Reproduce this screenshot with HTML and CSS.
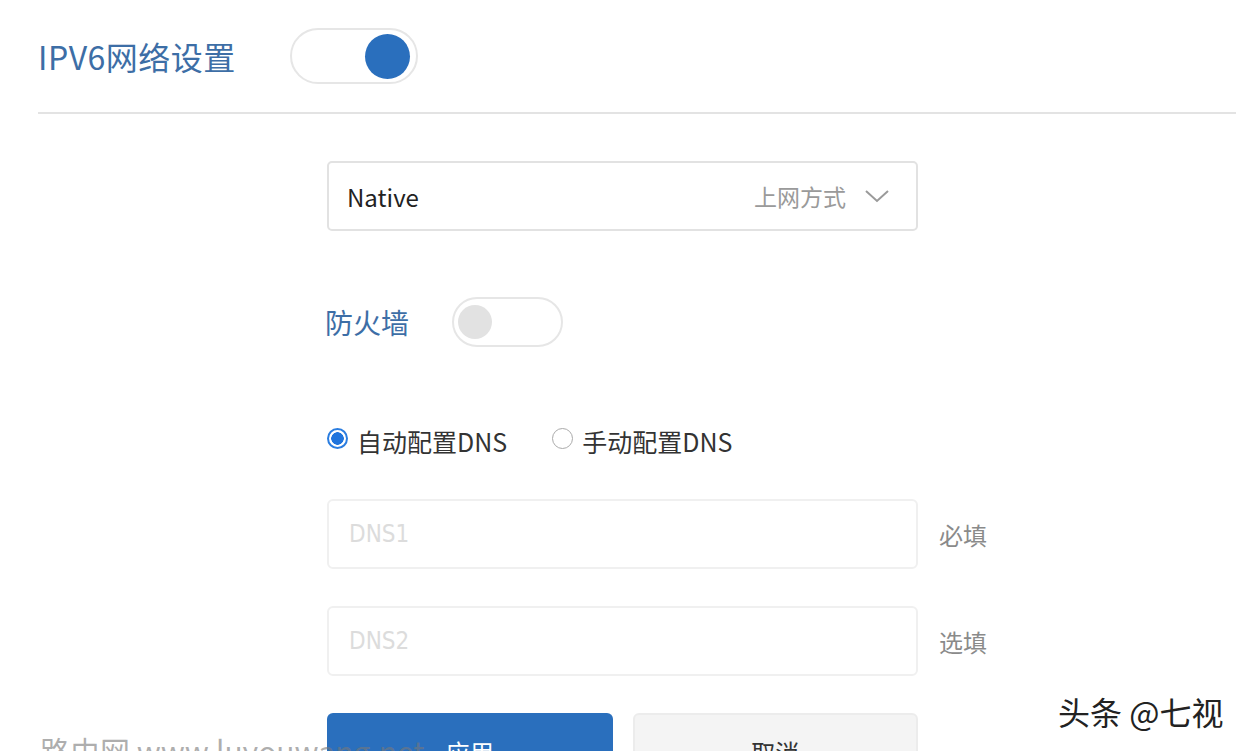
FILE: index.html
```html
<!DOCTYPE html>
<html lang="zh-CN">
<head>
    <meta charset="UTF-8">
    <title>IPV6网络设置</title>
    <link rel="stylesheet" href="styles.css">
</head>
<body>
    <div class="cabecalho">
        <h1 class="titulo">IPV6网络设置</h1>
        <div class="chave ligada"><span class="bolinha"></span></div>
    </div>

    <div class="formulario">
        <div class="seletor">
            <span class="valor">Native</span>
            <span class="rotulo">上网方式</span>
            <svg class="seta" width="26" height="16" viewBox="0 0 26 16">
                <path d="M2 3 L13 13 L24 3" fill="none" stroke="#9a9a9a" stroke-width="2"/>
            </svg>
        </div>

        <div class="linha-firewall">
            <span class="nome">防火墙</span>
            <div class="chave pequena"><span class="bolinha"></span></div>
        </div>

        <div class="radios">
            <label class="opcao"><span class="radio marcado"></span>自动配置DNS</label>
            <label class="opcao"><span class="radio"></span>手动配置DNS</label>
        </div>

        <div class="campo">
            <div class="entrada">DNS1</div>
            <span class="dica">必填</span>
        </div>
        <div class="campo segundo">
            <div class="entrada">DNS2</div>
            <span class="dica">选填</span>
        </div>

        <div class="botoes">
            <button class="aplicar">应用</button>
            <button class="cancelar">取消</button>
        </div>
    </div>

    <!-- marcas d'água -->
    <div class="marca-site">路由网 www.luyouwang.net</div>
    <div class="marca-autor">头条 @七视</div>
</body>
</html>
```

FILE: styles.css
```css
body {
    margin: 0;
    background: #fff;
    font-family: "Noto Sans CJK SC", "Noto Sans", sans-serif;
    width: 1246px;
    height: 751px;
    overflow: hidden;
    position: relative;
}
.cabecalho {
    display: flex;
    align-items: center;
    height: 112px;
    margin: 0 10px 0 38px;
    border-bottom: 2px solid #e3e3e3;
}
.titulo {
    margin: 0 54px 0 0;
    font-size: 32px;
    font-weight: normal;
    color: #3d6ea6;
    letter-spacing: 0.5px;
}
.chave {
    box-sizing: border-box;
    width: 128px;
    height: 56px;
    border: 2px solid #e6e6e6;
    border-radius: 28px;
    display: flex;
    align-items: center;
    padding: 0 6px;
}
.chave.ligada {
    justify-content: flex-end;
}
.chave.ligada .bolinha {
    width: 45px;
    height: 45px;
    border-radius: 50%;
    background: #2a6fbd;
}
.chave.pequena {
    width: 111px;
    height: 50px;
    border-radius: 25px;
    padding: 0 4px;
}
.chave.pequena .bolinha {
    width: 34px;
    height: 34px;
    border-radius: 50%;
    background: #e2e2e2;
}
.formulario {
    margin-left: 327px;
    width: 591px;
}
.seletor {
    margin-top: 47px;
    box-sizing: border-box;
    height: 70px;
    border: 2px solid #e2e2e2;
    border-radius: 5px;
    display: flex;
    align-items: center;
    padding: 0 26px 0 18px;
}
.seletor .valor {
    font-size: 24px;
    color: #222;
    flex: 1;
}
.seletor .rotulo {
    font-size: 23px;
    color: #9a9a9a;
    margin-right: 18px;
}
.linha-firewall {
    margin-top: 66px;
    display: flex;
    align-items: center;
    margin-left: -2px;
}
.linha-firewall .nome {
    font-size: 28px;
    color: #3d6ea6;
    margin-right: 43px;
}
.radios {
    margin-top: 78px;
    display: flex;
    align-items: center;
    height: 32px;
}
.opcao {
    display: flex;
    align-items: center;
    font-size: 25px;
    color: #333;
    margin-right: 45px;
}
.radio {
    box-sizing: border-box;
    width: 21px;
    height: 21px;
    border-radius: 50%;
    border: 1.5px solid #aaa;
    margin-right: 9px;
    margin-top: -6px;
    background: #fff;
}
.radio.marcado {
    border: 2px solid #2a7de0;
    background: radial-gradient(circle, #1f74dd 0 6px, #fff 6.5px);
}
.campo {
    margin-top: 42px;
    display: flex;
    align-items: center;
    width: 670px;
}
.campo.segundo {
    margin-top: 37px;
}
.entrada {
    box-sizing: border-box;
    width: 591px;
    height: 70px;
    border: 2px solid #f0f0f0;
    border-radius: 6px;
    display: flex;
    align-items: center;
    padding-left: 20px;
    font-size: 24px;
    color: #dcdcdc;
    font-family: "DejaVu Sans Condensed", "Liberation Sans", sans-serif;
}
.dica {
    margin-left: 21px;
    font-size: 24px;
    color: #8a8a8a;
}
.botoes {
    margin-top: 37px;
    display: flex;
    gap: 20px;
}
.botoes button {
    width: 286px;
    height: 70px;
    border-radius: 6px;
    font-family: "Noto Sans CJK SC", sans-serif;
    font-size: 24px;
    padding-top: 8px;
}
.aplicar {
    background: #2a6fbd;
    color: #fff;
    border: none;
}
.cancelar {
    background: #f4f4f4;
    color: #333;
    border: 2px solid #ececec;
}
.marca-site {
    position: absolute;
    left: 40px;
    top: 728px;
    font-size: 30px;
    color: rgba(120, 120, 120, 0.6);
    white-space: nowrap;
}
.marca-autor {
    position: absolute;
    left: 1058px;
    top: 688px;
    font-size: 32px;
    color: #222;
    text-shadow: 1px 1px 0 #fff, -1px -1px 0 #fff, 1px -1px 0 #fff, -1px 1px 0 #fff;
}
```
